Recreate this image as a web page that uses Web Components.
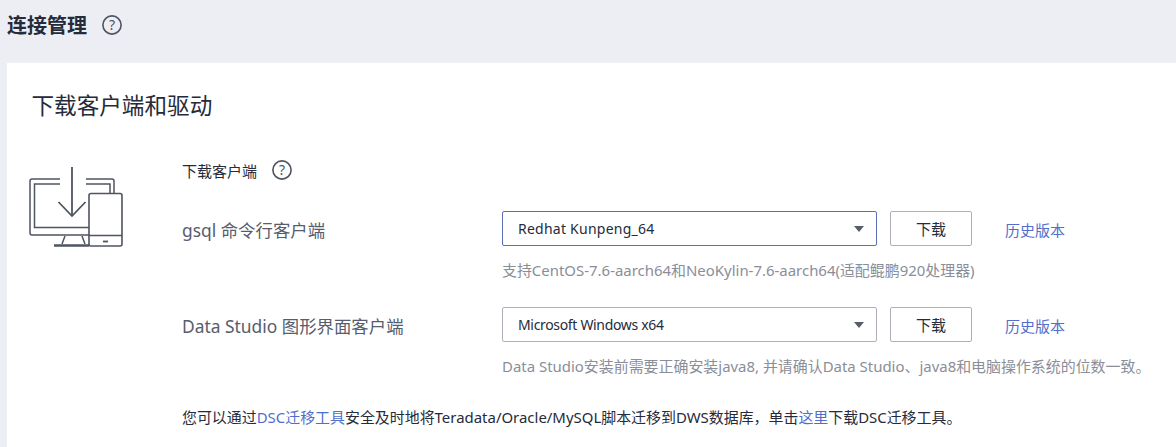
<!DOCTYPE html>
<html lang="zh">
<head>
<meta charset="utf-8">
<title>连接管理</title>
<style>
  html, body { margin: 0; height: 447px; overflow: hidden; background: #eceef4; }
  body { font-family: "Noto Sans", "Noto Sans CJK SC", sans-serif; color: #252b3a; }
</style>
</head>
<body>
<conn-page></conn-page>

<script>
class HelpIcon extends HTMLElement {
  constructor() {
    super();
    this.attachShadow({ mode: 'open' }).innerHTML = `
      <style>
        :host { display: inline-flex; color: #4f5461; }
        svg { display: block; width: 20px; height: 20px; }
        text { font: 14px "Noto Sans", sans-serif; fill: currentColor; }
      </style>
      <svg viewBox="0 0 20 20" fill="none">
        <circle cx="10" cy="10" r="9.1" stroke="currentColor" stroke-width="1.6"/>
        <text x="10" y="15" text-anchor="middle">?</text>
      </svg>`;
  }
}
customElements.define('help-icon', HelpIcon);

class SelectBox extends HTMLElement {
  constructor() {
    super();
    this.attachShadow({ mode: 'open' }).innerHTML = `
      <style>
        :host {
          display: flex; align-items: center; justify-content: space-between;
          box-sizing: border-box; width: 375px; height: 35px;
          padding: 0 12px 0 15px;
          background: #fff; border: 1px solid #adb0b8; border-radius: 2px;
          font-size: 14px; color: #252b3a;
        }
        :host([active]) { border-color: #5a6db5; }
        i { width: 0; height: 0; border: 5px solid transparent; border-top: 6px solid #575d6c; border-bottom: 0; }
      </style>
      <slot></slot><i></i>`;
  }
}
customElements.define('select-box', SelectBox);

class DownloadButton extends HTMLElement {
  constructor() {
    super();
    this.attachShadow({ mode: 'open' }).innerHTML = `
      <style>
        :host {
          display: flex; align-items: center; justify-content: center;
          box-sizing: border-box; width: 82px; height: 35px;
          background: #fff; border: 1px solid #adb0b8; border-radius: 2px;
          font-size: 15px; color: #252b3a;
        }
      </style>
      <slot></slot>`;
  }
}
customElements.define('download-button', DownloadButton);

class ClientRow extends HTMLElement {
  static get observedAttributes() { return ['label', 'option', 'hint', 'active', 'track']; }
  constructor() {
    super();
    this.attachShadow({ mode: 'open' });
  }
  connectedCallback() { this.render(); }
  attributeChangedCallback() { this.render(); }

  render() {
    const active = this.hasAttribute('active') ? 'active' : '';
    const track = this.getAttribute('track') || '0';
    this.shadowRoot.innerHTML = `
      <style>
        :host {
          display: grid;
          grid-template-columns: 307px 375px 82px auto;
          column-gap: 13px;
          row-gap: 14px;
          align-items: center;
        }
        .label { font-size: 17.4px; color: #575d6c; padding-top: 2px; white-space: nowrap; }
        .history { font-size: 15px; color: #526ecc; margin-left: 20px; padding-top: 2px; white-space: nowrap; }
        .hint { grid-column: 2 / 5; font-size: 14.95px; line-height: 21px; color: #8a8e99; white-space: nowrap; }
        select-box { letter-spacing: ${track}; }
      </style>
      <div class="label">${this.getAttribute('label') || ''}</div>
      <select-box ${active}>${this.getAttribute('option') || ''}</select-box>
      <download-button>下载</download-button>
      <div class="history">历史版本</div>
      <div class="hint">${this.getAttribute('hint') || ''}</div>`;
  }
}
customElements.define('client-row', ClientRow);

class DeviceIcon extends HTMLElement {
  constructor() {
    super();
    this.attachShadow({ mode: 'open' }).innerHTML = `
      <style>
        :host { display: block; width: 94px; height: 82px; }
        svg { display: block; }
      </style>
      <svg width="94" height="82" viewBox="0 0 94 82" fill="none" stroke="#4f5461" stroke-width="1.5">
        <path d="M31 12H3Q1 12 1 14V66Q1 68 3 68H60"/>
        <path d="M31 17H5.500V60.500H60"/>
        <path d="M57 12H83Q85 12 85 14V26"/>
        <path d="M57 17H81V26"/>
        <path d="M43 0V48" stroke-width="1.8"/>
        <path d="M29.500 35L43 49L56.500 35" stroke-width="1.8"/>
        <rect x="60" y="26.500" width="33" height="52.500" rx="2" stroke-width="1.6"/>
        <path d="M60 68.500H93"/>
        <path d="M74 74.500H79" stroke-width="1.8"/>
        <path d="M36 69L33 77M53 69L56 77"/>
        <path d="M25 78.500H60" stroke-width="2.400"/>
      </svg>`;
  }
}
customElements.define('device-icon', DeviceIcon);

class ConnPage extends HTMLElement {
  constructor() {
    super();
    this.attachShadow({ mode: 'open' }).innerHTML = `
      <style>
        :host { display: block; font-family: "Noto Sans", "Noto Sans CJK SC", sans-serif; }
        header { display: flex; align-items: center; gap: 15px; height: 50px; padding-left: 7px; }
        h1 { margin: 0 0 2px; font-size: 20px; font-weight: 600; color: #252b3a; }
        .card { margin: 13px 0 0 7px; height: 384px; box-sizing: border-box; padding: 28px 0 0 25px; background: #fff; overflow: hidden; }
        h2 { margin: 0; font-size: 22.6px; line-height: 30px; font-weight: 400; color: #252b3a; transform: translateX(-0.5px); }
        .body { display: flex; margin-top: 36px; }
        device-icon { flex: none; margin: 10px 0 0 -3px; }
        .main { margin-left: 59px; }
        .sub { display: flex; align-items: center; gap: 15px; height: 26px; font-size: 15px; }
        client-row { margin-top: 28px; }
        client-row + client-row { margin-top: 26px; }
        .foot { margin-top: 30px; font-size: 14.95px; line-height: 21px; white-space: nowrap; color: #252b3a; }
        a { color: #526ecc; text-decoration: none; }
      </style>
      <header><h1>连接管理</h1><help-icon></help-icon></header>
      <section class="card">
        <h2>下载客户端和驱动</h2>
        <div class="body">
          <device-icon></device-icon>
          <div class="main">
            <div class="sub">下载客户端<help-icon></help-icon></div>
            <client-row active track="0.24px" label="gsql 命令行客户端" option="Redhat Kunpeng_64"
              hint="支持CentOS-7.6-aarch64和NeoKylin-7.6-aarch64(适配鲲鹏920处理器)"></client-row>
            <client-row track="-0.33px" label="Data Studio 图形界面客户端" option="Microsoft Windows x64"
              hint="Data Studio安装前需要正确安装java8, 并请确认Data Studio、java8和电脑操作系统的位数一致。"></client-row>
            <div class="foot">您可以通过<a href="#">DSC迁移工具</a>安全及时地将Teradata/Oracle/MySQL脚本迁移到DWS数据库，单击<a href="#">这里</a>下载DSC迁移工具。</div>
          </div>
        </div>
      </section>`;
  }
}
customElements.define('conn-page', ConnPage);
</script>
</body>
</html>
